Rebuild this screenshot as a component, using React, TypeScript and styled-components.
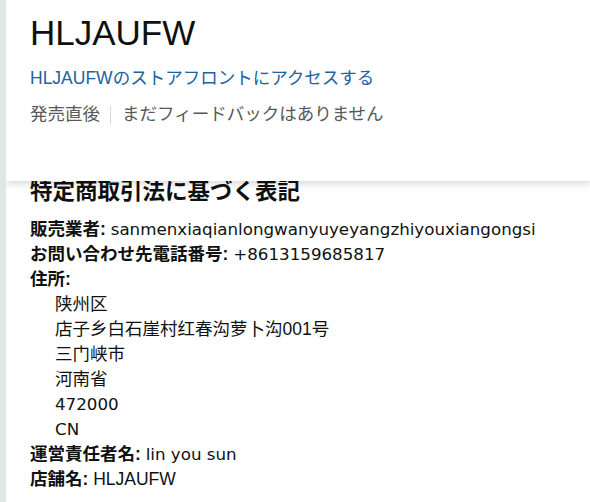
import styled, { createGlobalStyle } from 'styled-components';

const GlobalStyle = createGlobalStyle`
    html, body {
        margin: 0;
        padding: 0;
        background: #e3e6e6;
    }
    body {
        font-family: "Liberation Sans", Arial, "Noto Sans CJK JP", sans-serif;
        color: #0f1111;
    }
`

const Page = styled.div`
    margin-left: 6px;
    min-height: 502px;
    background: #fff;
    overflow: hidden;
`

const Header = styled.div`
    position: relative;
    z-index: 1;
    height: 181px;
    box-sizing: border-box;
    padding: 11px 24px 0;
    background: #fff;
    box-shadow: 0 3px 7px rgba(0, 0, 0, 0.14);
`

const StoreName = styled.h1`
    margin: 0;
    font-size: 35px;
    line-height: 44px;
    font-weight: 400;
    color: #0f1111;
`

const StoreLink = styled.a`
    display: block;
    margin-top: 11px;
    font-size: 17.5px;
    line-height: 25px;
    color: #2162a1;
    text-decoration: none;
`

const Meta = styled.div`
    display: flex;
    align-items: center;
    margin-top: 11px;
    font-size: 17.5px;
    line-height: 25px;
    color: #565959;
`

const Divider = styled.span`
    width: 1px;
    height: 18px;
    margin: 0 11px 0 10px;
    background: #d5d9d9;
`

const Content = styled.div`
    padding: 0 24px;
`

const Heading = styled.h2`
    margin: -4px 0 10px;
    font-size: 22.5px;
    line-height: 30px;
    font-weight: 700;
    color: #0f1111;
`

const Row = styled.div`
    font-size: 17.5px;
    line-height: 25px;
`

const Label = styled.b`
    font-weight: 700;
`

// latin values are set in a wider face, as in the capture
const Value = styled.span`
    font-family: "DejaVu Sans", Verdana, "Noto Sans CJK JP", sans-serif;
    font-size: 16.7px;
`

const Address = styled.div<{ $latin?: boolean }>`
    padding-left: 25px;
    font-size: ${(p) => (p.$latin ? '16.7px' : '17.5px')};
    line-height: 25px;
    font-family: ${(p) => (p.$latin ? '"DejaVu Sans", Verdana, sans-serif' : 'inherit')};
`

const addressLines = [
    '陕州区',
    '店子乡白石崖村红春沟萝卜沟001号',
    '三门峡市',
    '河南省',
    '472000',
    'CN',
];

const isLatin = (s: string) => /^[\x20-\x7e]+$/.test(s);

const App = () => {
    return (
        <>
            <GlobalStyle />
            <Page>
                <Header>
                    <StoreName>HLJAUFW</StoreName>
                    <StoreLink href="#">HLJAUFWのストアフロントにアクセスする</StoreLink>
                    <Meta>
                        <span>発売直後</span>
                        <Divider />
                        <span>まだフィードバックはありません</span>
                    </Meta>
                </Header>
                <Content>
                    <Heading>特定商取引法に基づく表記</Heading>
                    <Row><Label>販売業者:</Label> <Value>sanmenxiaqianlongwanyuyeyangzhiyouxiangongsi</Value></Row>
                    <Row><Label>お問い合わせ先電話番号:</Label> <Value>+8613159685817</Value></Row>
                    <Row><Label>住所:</Label></Row>
                    {addressLines.map((line) => (
                        <Address key={line} $latin={isLatin(line)}>{line}</Address>
                    ))}
                    <Row><Label>運営責任者名:</Label> <Value>lin you sun</Value></Row>
                    <Row><Label>店舗名:</Label> HLJAUFW</Row>
                </Content>
            </Page>
        </>
    )
}

export default App;
